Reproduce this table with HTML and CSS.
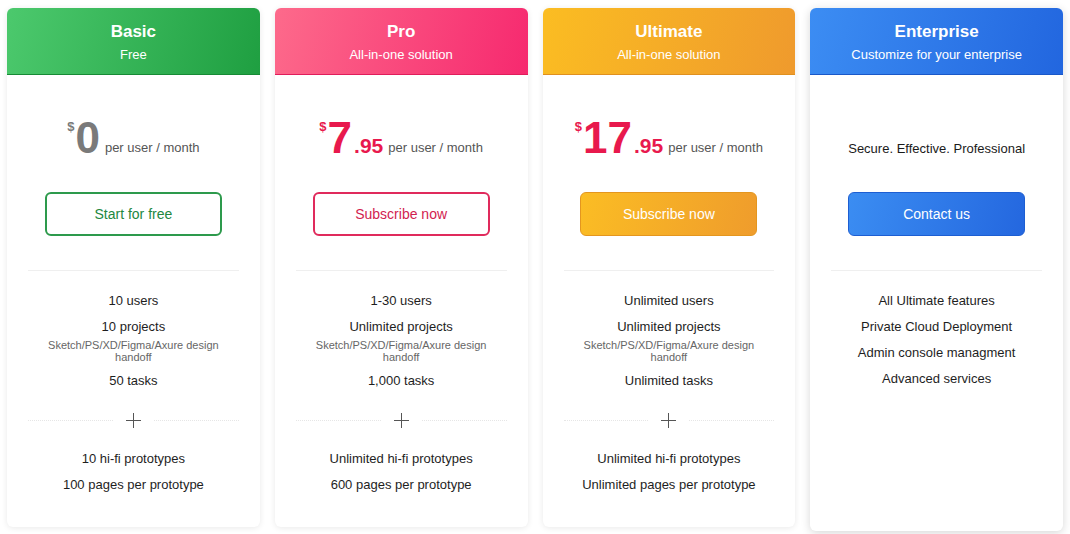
FILE: index.html
```html
<!DOCTYPE html>
<html lang="en">
<head>
<meta charset="utf-8">
<title>Pricing</title>
<link rel="stylesheet" href="styles.css">
</head>
<body>
<div class="plans">
  <section class="card basic">
    <header class="head">
      <h2 class="title">Basic</h2>
      <p class="sub">Free</p>
    </header>
    <div class="price"><span class="cur">$</span><span class="int">0</span><span class="unit">per user / month</span></div>
    <a class="btn">Start for free</a>
    <div class="rule"></div>
    <ul class="feats">
      <li>10 users</li>
      <li>10 projects<span class="desc">Sketch/PS/XD/Figma/Axure design handoff</span></li>
      <li>50 tasks</li>
    </ul>
    <div class="plus"><span class="dots"></span><span class="cross"></span><span class="dots"></span></div>
    <ul class="feats">
      <li>10 hi-fi prototypes</li>
      <li>100 pages per prototype</li>
    </ul>
  </section>

  <section class="card pro">
    <header class="head">
      <h2 class="title">Pro</h2>
      <p class="sub">All-in-one solution</p>
    </header>
    <div class="price"><span class="cur">$</span><span class="int">7</span><span class="dec">.95</span><span class="unit">per user / month</span></div>
    <a class="btn">Subscribe now</a>
    <div class="rule"></div>
    <ul class="feats">
      <li>1-30 users</li>
      <li>Unlimited projects<span class="desc">Sketch/PS/XD/Figma/Axure design handoff</span></li>
      <li>1,000 tasks</li>
    </ul>
    <div class="plus"><span class="dots"></span><span class="cross"></span><span class="dots"></span></div>
    <ul class="feats">
      <li>Unlimited hi-fi prototypes</li>
      <li>600 pages per prototype</li>
    </ul>
  </section>

  <section class="card ultimate">
    <header class="head">
      <h2 class="title">Ultimate</h2>
      <p class="sub">All-in-one solution</p>
    </header>
    <div class="price"><span class="cur">$</span><span class="int">17</span><span class="dec">.95</span><span class="unit">per user / month</span></div>
    <a class="btn">Subscribe now</a>
    <div class="rule"></div>
    <ul class="feats">
      <li>Unlimited users</li>
      <li>Unlimited projects<span class="desc">Sketch/PS/XD/Figma/Axure design handoff</span></li>
      <li>Unlimited tasks</li>
    </ul>
    <div class="plus"><span class="dots"></span><span class="cross"></span><span class="dots"></span></div>
    <ul class="feats">
      <li>Unlimited hi-fi prototypes</li>
      <li>Unlimited pages per prototype</li>
    </ul>
  </section>

  <section class="card enterprise">
    <header class="head">
      <h2 class="title">Enterprise</h2>
      <p class="sub">Customize for your enterprise</p>
    </header>
    <div class="price tagline">Secure. Effective. Professional</div>
    <a class="btn">Contact us</a>
    <div class="rule"></div>
    <ul class="feats">
      <li>All Ultimate features</li>
      <li>Private Cloud Deployment</li>
      <li>Admin console managment</li>
      <li>Advanced services</li>
    </ul>
  </section>
</div>
</body>
</html>
```

FILE: styles.css
```css
* { box-sizing: border-box; }
html, body { margin: 0; padding: 0; background: #fff; }
body {
  font-family: "Liberation Sans", Arial, sans-serif;
  color: #222;
  width: 1070px;
  height: 534px;
  overflow: hidden;
}
.plans {
  display: grid;
  grid-template-columns: repeat(4, 1fr);
  column-gap: 15px;
  padding: 8px 7px 0;
  align-items: start;
}
.card {
  height: 519px;
  background: #fff;
  border-radius: 6px;
  box-shadow: 0 1px 6px rgba(0,0,0,0.09);
  display: flex;
  flex-direction: column;
  align-items: center;
}
.enterprise {
  height: 523px;
  box-shadow: 0 2px 10px rgba(0,0,0,0.16);
}
.head {
  width: 100%;
  height: 67px;
  padding-top: 13px;
  border-radius: 6px 6px 0 0;
  text-align: center;
  color: #fff;
  border-bottom: 1px solid rgba(0,0,0,0.12);
}
.title {
  margin: 0;
  font-size: 17px;
  line-height: 22px;
  font-weight: bold;
}
.sub {
  margin: 3px 0 0;
  font-size: 13px;
  line-height: 18px;
}
.basic .head { background: linear-gradient(105deg, #4cc96d 0%, #1f9f41 100%); border-bottom-color: #178a35; }
.pro .head { background: linear-gradient(105deg, #fd6a8b 0%, #f6296f 100%); border-bottom-color: #e01d5b; }
.ultimate .head { background: linear-gradient(105deg, #fbbd22 0%, #ef9a2d 100%); border-bottom-color: #e0901f; }
.enterprise .head { background: linear-gradient(105deg, #3c8df3 0%, #2266df 100%); border-bottom-color: #1a58c8; }

.price {
  margin-top: 40px;
  height: 46px;
  display: flex;
  align-items: baseline;
  justify-content: center;
  line-height: 46px;
}
.cur {
  font-size: 13px;
  font-weight: bold;
  align-self: flex-start;
  line-height: 13px;
  margin-top: 5px;
  margin-right: 1px;
}
.int {
  font-size: 44px;
  font-weight: bold;
}
.dec {
  font-size: 21px;
  font-weight: bold;
  margin-left: 2px;
}
.unit {
  font-size: 13px;
  color: #555;
  margin-left: 5px;
  position: relative;
  top: -1px;
}
.basic .cur, .basic .int { color: #7a7a7a; }
.pro .price, .ultimate .price { color: #e8194d; }
.pro .unit, .ultimate .unit { color: #555; }
.tagline {
  display: block;
  font-size: 13px;
  line-height: 16px;
  padding-top: 26px;
  color: #1a1a1a;
}

.btn {
  margin-top: 31px;
  width: 177px;
  height: 44px;
  border-radius: 6px;
  border: 2px solid;
  display: flex;
  align-items: center;
  justify-content: center;
  font-size: 14px;
}
.basic .btn { border-color: #2d9a4c; color: #22883f; }
.pro .btn { border-color: #e02a5c; color: #d22250; }
.ultimate .btn {
  border: 1px solid #e4961f;
  color: #fff;
  background: linear-gradient(105deg, #fbbd24 0%, #ef9c2c 100%);
}
.enterprise .btn {
  border: 1px solid #1d5ed2;
  color: #fff;
  background: linear-gradient(105deg, #3b8df2 0%, #2467df 100%);
}

.rule {
  margin-top: 34px;
  width: calc(100% - 42px);
  height: 1px;
  background: #efefef;
}
.feats {
  list-style: none;
  margin: 22px 0 0;
  padding: 0;
  width: 100%;
  text-align: center;
  font-size: 13px;
  line-height: 16px;
  color: #1e1e1e;
}
.feats li { margin-bottom: 10px; }
.feats li:last-child { margin-bottom: 0; }
.desc {
  display: block;
  margin: 4px auto 0;
  font-size: 11px;
  line-height: 12px;
  color: #666;
  width: 185px;
}
.plus {
  width: calc(100% - 42px);
  height: 16px;
  margin-top: 23px;
  display: flex;
  align-items: center;
  gap: 13px;
}
.plus + .feats { margin-top: 23px; }
.dots {
  flex: 1;
  height: 0;
  border-top: 1px dotted #e6e6e6;
}
.cross {
  position: relative;
  width: 15px;
  height: 15px;
}
.cross::before, .cross::after {
  content: "";
  position: absolute;
  background: #555;
}
.cross::before { left: 0; right: 0; top: 7px; height: 1px; }
.cross::after { top: 0; bottom: 0; left: 7px; width: 1px; }
```
